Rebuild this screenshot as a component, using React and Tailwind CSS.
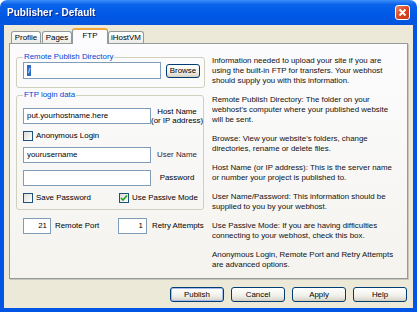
import React from 'react';

const Check = ({ checked }) => (
  <div className="w-[10px] h-[10px] border border-[#1C5180] bg-[linear-gradient(135deg,#DCDCD7,#FFFFFF)] flex items-center justify-center shrink-0">
    {checked && (
      <svg width="8" height="8" viewBox="0 0 8 8">
        <path d="M1 4 L3 6 L7 1.5" fill="none" stroke="#21A121" strokeWidth="1.6" />
      </svg>
    )}
  </div>
);

const Field = ({ className = '', children, right }) => (
  <div
    className={`h-[16px] border border-[#7F9DB9] bg-white flex items-center px-[3px] shrink-0 ${right ? 'justify-end' : ''} ${className}`}
  >
    {children}
  </div>
);

const Btn = ({ children, primary, w = 'w-[54px] h-[15px]' }) => (
  <button
    className={`${w} shrink-0 rounded-[3px] border border-[#003C74] bg-[linear-gradient(to_bottom,#FFFFFF,#F0F0EA_60%,#D6D0C5)] text-center leading-[12px] ${
      primary ? 'shadow-[inset_0_0_0_1px_#A6BDEB]' : 'shadow-[inset_0_-1px_0_#D8D2BD]'
    }`}
  >
    {children}
  </button>
);

const Tab = ({ children, active, w }) =>
  active ? (
    <div
      className={`${w} h-[16px] -mb-px relative z-10 -mx-px rounded-t-[3px] border-t-2 border-t-[#F3A63A] border-x border-x-[#919B9C] bg-[#FCFCFE] text-center leading-[12px]`}
    >
      {children}
    </div>
  ) : (
    <div
      className={`${w} h-[12px] rounded-t-[3px] border border-b-0 border-[#919B9C] bg-[linear-gradient(to_bottom,#FFFFFF,#ECEBE6)] text-center leading-[12px]`}
    >
      {children}
    </div>
  );

const help = [
  ['Information needed to upload your site if you are', 'using the built-in FTP for transfers. Your webhost', 'should supply you with this information.'],
  ['Remote Publish Directory: The folder on your', "webhost's computer where your published website", 'will be sent.'],
  ["Browse: View your website's folders, change", 'directories, rename or delete files.'],
  ['Host Name (or IP address): This is the server name', 'or number your project is published to.'],
  ['User Name/Password: This information should be', 'supplied to you by your webhost.'],
  ['Use Passive Mode: If you are having difficulties', 'connecting to your webhost, check this box.'],
  ['Anonymous Login, Remote Port and Retry Attempts', 'are advanced options.'],
];

export default function App() {
  return (
    <div className="w-[417px] h-[312px] flex flex-col font-['Liberation_Sans',Arial,sans-serif] text-[7.9px] text-black">
      {/* title bar */}
      <div className="h-[25px] shrink-0 rounded-t-[7px] bg-[linear-gradient(to_bottom,#3D8EF8_0%,#0A63EA_18%,#0058E6_60%,#0453DC_100%)] flex items-center pl-[7px] pr-[7px]">
        <span className="text-white font-bold text-[10px] drop-shadow-[1px_1px_0_#0A2A8A]">Publisher - Default</span>
        <div className="ml-auto w-[15px] h-[15px] rounded-[3px] border border-white bg-[linear-gradient(135deg,#E8866A,#D8431E_55%,#C0381A)] flex items-center justify-center">
          <svg width="9" height="9" viewBox="0 0 9 9">
            <path d="M1.5 1.5 L7.5 7.5 M7.5 1.5 L1.5 7.5" stroke="white" strokeWidth="1.8" />
          </svg>
        </div>
      </div>

      {/* body */}
      <div className="flex-1 flex flex-col bg-[#ECE9D8] border-x-4 border-b-4 border-[#0055E5] px-[5px] pt-[3px]">
        <div className="h-[15px] flex items-end pl-[2px] gap-px">
          <Tab w="w-[30px]">Profile</Tab>
          <Tab w="w-[30px]">Pages</Tab>
          <Tab w="w-[36px]" active>FTP</Tab>
          <Tab w="w-[36px]">iHostVM</Tab>
        </div>

        <div className="h-[236px] border border-[#919B9C] shadow-[1px_1px_0_#C9C6B6] bg-[linear-gradient(to_bottom,#FCFCFE,#F4F3EE)] flex">
          {/* left column */}
          <div className="w-[188px] ml-[6px] pt-[8px] flex flex-col">
            <fieldset className="border border-[#D0D0BF] rounded-[3px] pl-[6px] pr-[4px] pb-[8px]">
              <legend className="px-px text-[#0046D5] leading-[10px]">Remote Publish Directory</legend>
              <div className="flex items-center gap-[5px]">
                <Field className="w-[138px] h-[17px]">
                  <span className="bg-[#316AC5] text-white px-px">/</span>
                </Field>
                <Btn w="w-[34px] h-[14px]">Browse</Btn>
              </div>
            </fieldset>

            <fieldset className="mt-[2px] border border-[#D0D0BF] rounded-[3px] pl-[6px] pr-0 pb-[6px]">
              <legend className="px-px text-[#0046D5] leading-[10px]">FTP login data</legend>
              <div className="mt-[7px] flex items-center">
                <Field className="w-[128px]">put.yourhostname.here</Field>
                <div className="flex-1 text-center leading-[9px] whitespace-nowrap">
                  Host Name
                  <br />
                  (or IP address)
                </div>
              </div>
              <div className="mt-[6px] flex items-center gap-[3px] h-[10px]">
                <Check />
                <span>Anonymous Login</span>
              </div>
              <div className="mt-[6px] flex items-center">
                <Field className="w-[128px]">yourusername</Field>
                <div className="flex-1 text-center text-[#3A2030]">User Name</div>
              </div>
              <div className="mt-[7px] flex items-center">
                <Field className="w-[128px]" />
                <div className="flex-1 text-center">Password</div>
              </div>
              <div className="mt-[7px] flex items-center h-[10px]">
                <div className="w-[96px] flex items-center gap-[3px]">
                  <Check />
                  <span>Save Password</span>
                </div>
                <div className="flex items-center gap-[3px] whitespace-nowrap">
                  <Check checked />
                  <span>Use Passive Mode</span>
                </div>
              </div>
            </fieldset>

            <div className="mt-[8px] ml-[7px] flex items-center whitespace-nowrap">
              <div className="w-[95px] flex items-center gap-[4px]">
                <Field className="w-[28px] h-[15px]" right>21</Field>
                <span>Remote Port</span>
              </div>
              <div className="flex items-center gap-[5px]">
                <Field className="w-[29px] h-[15px]" right>1</Field>
                <span>Retry Attempts</span>
              </div>
            </div>
          </div>

          {/* right column */}
          <div className="ml-[8px] pt-[12px] flex flex-col gap-[9px] leading-[10px] text-[#111]">
            {help.map((p, i) => (
              <div key={i}>
                {p.map((l, j) => (
                  <div key={j} className="whitespace-nowrap">{l}</div>
                ))}
              </div>
            ))}
          </div>
        </div>

        <div className="mt-[8px] flex justify-end gap-[7px] pr-px">
          <Btn primary>Publish</Btn>
          <Btn>Cancel</Btn>
          <Btn>Apply</Btn>
          <Btn>Help</Btn>
        </div>
      </div>
    </div>
  );
}
